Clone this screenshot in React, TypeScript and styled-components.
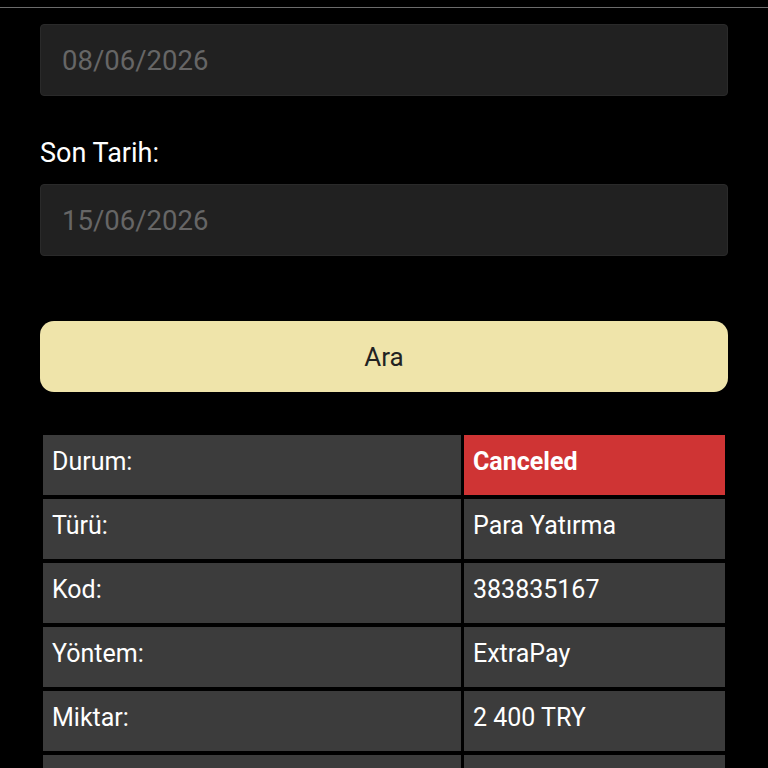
import styled, { createGlobalStyle } from 'styled-components';

const GlobalStyle = createGlobalStyle`
  html, body {
    margin: 0;
    padding: 0;
    background: #000;
    overflow: hidden;
  }

  body {
    font-family: Roboto, 'Noto Sans', sans-serif;
    color: #fff;
  }
`;

interface DetailRow {
  label: string;
  value: string;
  status?: boolean;
}

const rows: DetailRow[] = [
  { label: 'Durum:', value: 'Canceled', status: true },
  { label: 'Türü:', value: 'Para Yatırma' },
  { label: 'Kod:', value: '383835167' },
  { label: 'Yöntem:', value: 'ExtraPay' },
  { label: 'Miktar:', value: '2 400 TRY' },
  { label: 'Tarih:', value: '08/06/2026' },
];

export default function App(): JSX.Element {
  return (
    <>
      <GlobalStyle />
      <TopBar />
      <Page>
        <Form>
          <Field>
            <Label>Başlangıç Tarihi:</Label>
            <DateInput type='text' readOnly placeholder='08/06/2026' />
          </Field>
          <Field>
            <Label>Son Tarih:</Label>
            <DateInput type='text' readOnly placeholder='15/06/2026' />
          </Field>
          <SearchButton type='button'>Ara</SearchButton>
        </Form>
        <DetailsTable>
          <tbody>
            {rows.map((row) => (
              <tr key={row.label}>
                <LabelCell>{row.label}</LabelCell>
                <ValueCell $status={row.status}>{row.value}</ValueCell>
              </tr>
            ))}
          </tbody>
        </DetailsTable>
      </Page>
    </>
  );
}

const TopBar = styled.div`
  position: fixed;
  top: 0;
  left: 0;
  right: 0;
  height: 7px;
  background: #000;
  border-bottom: 1px solid #6c6c6c;
  z-index: 2;
`;

const Page = styled.div`
  padding: 0 40px;
  margin-top: -23px;
`;

const Form = styled.div`
  display: flex;
  flex-direction: column;
`;

const Field = styled.div`
  display: flex;
  flex-direction: column;
  gap: 15px;
  margin-bottom: 41px;

  & + & {
    margin-bottom: 65px;
  }
`;

const Label = styled.label`
  font-size: 27px;
  line-height: 32px;
  color: #fff;
`;

const DateInput = styled.input`
  box-sizing: border-box;
  width: 100%;
  height: 72px;
  padding: 0 21px;
  background: #212121;
  border: 1px solid #2a2a2a;
  border-radius: 4px;
  font-family: Roboto, sans-serif;
  font-size: 27.5px;
  color: #666;
  outline: none;

  &::placeholder {
    color: #666;
  }
`;

const SearchButton = styled.button`
  height: 71px;
  width: 100%;
  border: none;
  border-radius: 14px;
  background: #efe4aa;
  color: #222;
  font-family: Roboto, sans-serif;
  font-size: 26px;
  cursor: pointer;
`;

const DetailsTable = styled.table`
  width: 100%;
  margin-top: 39px;
  border-spacing: 3px 4px;
  table-layout: fixed;

  td {
    height: 60px;
    box-sizing: border-box;
    padding: 12px 9px 8px;
    vertical-align: top;
    font-size: 25px;
    line-height: 30px;
    color: #fff;
  }
`;

const LabelCell = styled.td`
  width: 418px;
  background: #3c3c3c;
`;

const ValueCell = styled.td<{ $status?: boolean }>`
  background: ${({ $status }) => ($status ? '#cf3434' : '#3c3c3c')};
  font-weight: ${({ $status }) => ($status ? 700 : 400)};
`;
